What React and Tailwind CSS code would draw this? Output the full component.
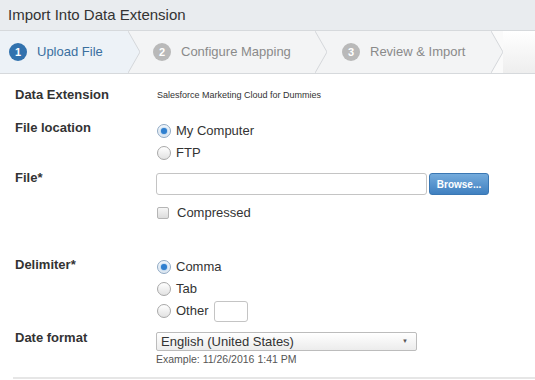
import React from 'react'

function Radio({ checked, label, children }) {
  return (
    <div className="flex items-center h-[22px]">
      <span
        className={`w-[14px] h-[14px] rounded-full border flex items-center justify-center ${
          checked ? 'border-[#8fa9c4] bg-linear-to-b from-[#f4f8fc] to-[#dfe8f1]' : 'border-[#a8a8a8] bg-linear-to-b from-white to-[#e2e2e2]'
        }`}
      >
        {checked && <span className="w-[6px] h-[6px] rounded-full bg-[#2f7fcf] shadow-[0_0_2px_#4f9be0]" />}
      </span>
      <span className="ml-[5px] text-[13px] text-[#333]">{label}</span>
      {children}
    </div>
  )
}

function Chevron({ from, to }) {
  return (
    <svg width="12" height="42" viewBox="0 0 12 42" className="block shrink-0">
      <rect x="0" y="0" width="12" height="42" fill={to} />
      <polygon points="0,0 12,21 0,42" fill={from} />
      <polyline points="0,0 12,21 0,42" fill="none" stroke="#d4d7da" strokeWidth="1" />
    </svg>
  )
}

function Step({ n, label, active, width, pl }) {
  return (
    <div
      className={`flex items-center h-full shrink-0 ${active ? 'bg-[#edf2f7]' : 'bg-[#f3f4f5]'}`}
      style={{ width, paddingLeft: pl }}
    >
      <span
        className={`w-[18px] h-[18px] rounded-full flex items-center justify-center text-white text-[11px] font-bold ${
          active ? 'bg-[#3272ae]' : 'bg-[#b9b9b9]'
        }`}
      >
        {n}
      </span>
      <span className={`ml-[10px] text-[13px] ${active ? 'text-[#3a6f9f]' : 'text-[#8a8a8a]'}`}>{label}</span>
    </div>
  )
}

function Label({ children, className = '' }) {
  return <div className={`w-[157px] shrink-0 pl-[15px] text-[13px] leading-[16px] font-bold text-[#333] ${className}`}>{children}</div>
}

export default function App() {
  return (
    <div className="w-[535px] h-[380px] bg-white overflow-hidden font-['Liberation_Sans',Arial,sans-serif]">
      {/* title */}
      <div className="h-[30px] bg-[#e9ecef] flex items-center pl-[8px] text-[15px] text-[#333]">
        Import Into Data Extension
      </div>

      {/* steps */}
      <div className="h-[44px] border-y border-[#d6d9dc] flex bg-linear-to-b from-white to-[#eeeeee]">
        <Step n="1" label="Upload File" active width={128} pl={9} />
        <Chevron from="#edf2f7" to="#f3f4f5" />
        <Step n="2" label="Configure Mapping" width={175} pl={13} />
        <Chevron from="#f3f4f5" to="#f3f4f5" />
        <Step n="3" label="Review & Import" width={164} pl={15} />
        <Chevron from="#f3f4f5" to="#fafafa" />
      </div>

      {/* form */}
      <div className="pt-[13px]">
        <div className="flex items-center">
          <Label>Data Extension</Label>
          <div className="text-[9px] leading-[16px] text-[#333]">Salesforce Marketing Cloud for Dummies</div>
        </div>

        <div className="flex items-start mt-[17px]">
          <Label>File location</Label>
          <div>
            <Radio checked label="My Computer" />
            <Radio label="FTP" />
          </div>
        </div>

        <div className="flex items-start mt-[6px]">
          <Label>File*</Label>
          <div className="flex mt-[3px] -ml-px">
            <input className="w-[271px] h-[22px] border border-[#c4c4c4] rounded-[3px] bg-white outline-none" />
            <button className="ml-[2px] w-[60px] h-[22px] rounded-[3px] bg-linear-to-b from-[#74abdc] to-[#3f80c0] border border-[#3a77b3] text-white text-[10px] font-bold">
              Browse...
            </button>
          </div>
        </div>

        <div className="flex items-center mt-[10px] h-[16px]">
          <div className="w-[157px] shrink-0" />
          <span className="w-[12px] h-[12px] rounded-[2px] border border-[#b5b5b5] bg-linear-to-b from-[#f6f6f6] to-[#dcdcdc]" />
          <span className="ml-[8px] text-[13px] text-[#333]">Compressed</span>
        </div>

        <div className="flex items-start mt-[35px]">
          <Label className="pt-[1px]">Delimiter*</Label>
          <div>
            <Radio checked label="Comma" />
            <Radio label="Tab" />
            <Radio label="Other">
              <input className="ml-[5px] w-[34px] h-[21px] border border-[#c4c4c4] rounded-[3px] bg-white outline-none" />
            </Radio>
          </div>
        </div>

        <div className="flex items-start mt-[8px]">
          <Label>Date format</Label>
          <div className="-ml-px">
            <div className="mt-[2px] w-[261px] h-[19px] border border-[#bcbcbc] rounded-[2px] bg-linear-to-b from-white to-[#ececec] flex items-center justify-between pl-[4px] pr-[8px]">
              <span className="text-[13px] text-[#333]">English (United States)</span>
              <span className="text-[6px] text-[#555]">▼</span>
            </div>
            <div className="mt-[1px] text-[10.5px] leading-[14px] text-[#555]">Example: 11/26/2016 1:41 PM</div>
          </div>
        </div>

        <div className="ml-[13px] mt-[11px] h-[2px] bg-[#e6e6e6]" />
      </div>
    </div>
  )
}
